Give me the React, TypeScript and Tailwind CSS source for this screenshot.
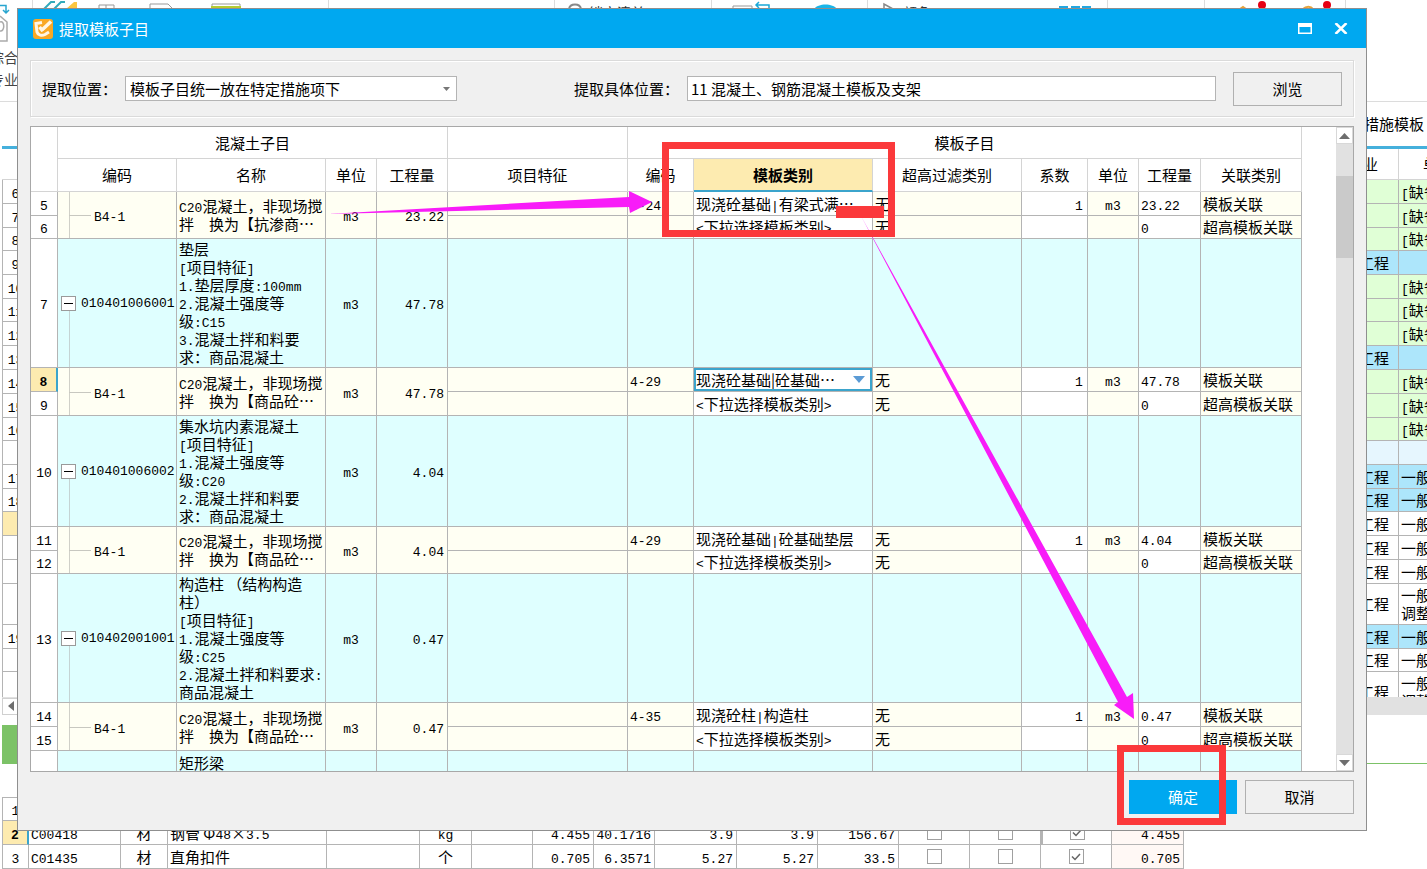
import { type ReactNode } from "react";
import clsx from "clsx";

type ChildRow = {
  no: number;
  h: string;
  code?: string;
  category: string;
  active?: boolean;
  factor?: string;
  unit?: string;
  amount: string;
  relation: string;
};

type Group =
  | {
      kind: "item";
      no?: number;
      h: string;
      code?: string;
      name: string;
      amount?: string;
    }
  | { kind: "quota"; name: string; amount: string; rows: ChildRow[] };

const quotaRows = (
  no: number,
  code: string,
  category: string,
  amount: string,
  shortRow = false,
  active = false
): ChildRow[] => [
  {
    no,
    h: "h-6",
    code,
    category,
    active,
    factor: "1",
    unit: "m3",
    amount,
    relation: "模板关联",
  },
  {
    no: no + 1,
    h: shortRow ? "h-[23px]" : "h-6",
    category: "<下拉选择模板类别>",
    amount: "0",
    relation: "超高模板关联",
  },
];

const groups: Group[] = [
  {
    kind: "quota",
    name: "C20混凝土，非现场搅\n拌　换为【抗渗商…",
    amount: "23.22",
    rows: quotaRows(5, "4-24", "现浇砼基础|有梁式满…", "23.22", true),
  },
  {
    kind: "item",
    no: 7,
    h: "h-[129px]",
    code: "010401006001",
    name: "垫层\n[项目特征]\n1.垫层厚度:100mm\n2.混凝土强度等\n级:C15\n3.混凝土拌和料要\n求：商品混凝土",
    amount: "47.78",
  },
  {
    kind: "quota",
    name: "C20混凝土，非现场搅\n拌　换为【商品砼…",
    amount: "47.78",
    rows: quotaRows(8, "4-29", "现浇砼基础|砼基础…", "47.78", false, true),
  },
  {
    kind: "item",
    no: 10,
    h: "h-[111px]",
    code: "010401006002",
    name: "集水坑内素混凝土\n[项目特征]\n1.混凝土强度等\n级:C20\n2.混凝土拌和料要\n求：商品混凝土",
    amount: "4.04",
  },
  {
    kind: "quota",
    name: "C20混凝土，非现场搅\n拌　换为【商品砼…",
    amount: "4.04",
    rows: quotaRows(11, "4-29", "现浇砼基础|砼基础垫层", "4.04", true),
  },
  {
    kind: "item",
    no: 13,
    h: "h-[129px]",
    code: "010402001001",
    name: "构造柱 （结构构造\n柱）\n[项目特征]\n1.混凝土强度等\n级:C25\n2.混凝土拌和料要求:\n商品混凝土",
    amount: "0.47",
  },
  {
    kind: "quota",
    name: "C20混凝土，非现场搅\n拌　换为【商品砼…",
    amount: "0.47",
    rows: quotaRows(14, "4-35", "现浇砼柱|构造柱", "0.47"),
  },
  { kind: "item", h: "h-[129px]", name: "矩形梁" },
];

// Half-width runs are set in a smaller monospace so they take half a Han character
const Mixed = ({ text }: { text: string }) => (
  <>
    {text.split(/([\x21-\x7e]+)/).map((run, i) =>
      i % 2 ? (
        <span
          key={i}
          className="font-['Liberation_Mono',monospace] text-[13px] leading-none"
        >
          {run}
        </span>
      ) : (
        run
      )
    )}
  </>
);

const Cell = ({
  children,
  className,
  rowSpan,
}: {
  children?: ReactNode;
  className?: string;
  rowSpan?: number;
}) => (
  <td
    rowSpan={rowSpan}
    className={clsx(
      "overflow-hidden border-r border-b border-[#b4b4b4] p-0 whitespace-pre",
      className
    )}
  >
    {children}
  </td>
);

const HeadCell = ({
  children,
  className,
  colSpan,
  rowSpan,
}: {
  children?: ReactNode;
  className?: string;
  colSpan?: number;
  rowSpan?: number;
}) => (
  <th
    colSpan={colSpan}
    rowSpan={rowSpan}
    className={clsx(
      "border-r border-b border-[#d4d4d4] p-0 whitespace-nowrap",
      className || "font-normal"
    )}
  >
    {children}
  </th>
);

const ItemRow = ({ row }: { row: Extract<Group, { kind: "item" }> }) => (
  <tr className={clsx(row.h, "bg-[#dfffff]")}>
    <Cell className="bg-white text-center">
      <Mixed text={row.no ? String(row.no) : ""} />
    </Cell>
    <Cell className="relative pl-[3px]">
      {row.code && (
        <>
          <div className="flex items-center gap-[5px]">
            <button
              aria-label="折叠"
              className="flex size-[15px] shrink-0 items-center justify-center border border-[#9a9a9a] bg-white"
            >
              <span className="h-px w-[9px] bg-black" />
            </button>
            <Mixed text={row.code} />
          </div>
          <span className="absolute top-[calc(50%+8px)] bottom-0 left-[11px] w-px bg-[#c4d4d4]" />
        </>
      )}
    </Cell>
    <Cell className={clsx("pl-[2px]", !row.code && "pt-[3px] align-top")}>
      <Mixed text={row.name} />
    </Cell>
    <Cell className="text-center">
      <Mixed text={row.code ? "m3" : ""} />
    </Cell>
    <Cell className="pr-[3px] text-right">
      <Mixed text={row.amount ?? ""} />
    </Cell>
    <Cell />
    <Cell />
    <Cell />
    <Cell />
    <Cell />
    <Cell />
    <Cell />
    <Cell />
  </tr>
);

const QuotaRows = ({ group }: { group: Extract<Group, { kind: "quota" }> }) => (
  <>
    {group.rows.map((row, i) => (
      <tr key={row.no} className={clsx(row.h, "bg-[#fffff3]")}>
        <Cell
          className={clsx(
            "text-center",
            row.active
              ? "border-r-2 border-r-[#3ba4cc] bg-[#fdebb0] font-bold"
              : "bg-white"
          )}
        >
          <Mixed text={String(row.no)} />
        </Cell>
        {i === 0 && (
          <>
            <Cell rowSpan={2} className="relative pl-9">
              <span className="absolute inset-y-0 left-[11px] w-px bg-[#d0d0c8]" />
              <span className="absolute top-1/2 left-[11px] h-px w-[22px] bg-[#c8c8c0]" />
              <Mixed text="B4-1" />
            </Cell>
            <Cell rowSpan={2} className="pl-[2px]">
              <Mixed text={group.name} />
            </Cell>
            <Cell rowSpan={2} className="text-center">
              <Mixed text="m3" />
            </Cell>
            <Cell rowSpan={2} className="pr-[3px] text-right">
              <Mixed text={group.amount} />
            </Cell>
          </>
        )}
        <Cell />
        <Cell className="pl-[2px]">
          <Mixed text={row.code ?? ""} />
        </Cell>
        {row.active ? (
          <Cell className="relative bg-white">
            <select
              aria-label="模板类别"
              className="block h-[23px] w-full appearance-none border-2 border-[#3ba4cc] bg-white leading-[18px]"
            >
              <option>{row.category}</option>
            </select>
            <svg
              className="pointer-events-none absolute top-2 right-[7px]"
              width="12"
              height="7"
              viewBox="0 0 12 7"
            >
              <path d="M0 0h12L6 7z" fill="#5b9bd5" />
            </svg>
          </Cell>
        ) : (
          <Cell className="bg-white pl-[2px]">
            <Mixed text={row.category} />
          </Cell>
        )}
        <Cell className="pl-[2px]">无</Cell>
        <Cell className="bg-white pr-1 text-right">
          <Mixed text={row.factor ?? ""} />
        </Cell>
        <Cell className="text-center">
          <Mixed text={row.unit ?? ""} />
        </Cell>
        <Cell className="bg-white pl-[2px]">
          <Mixed text={row.amount} />
        </Cell>
        <Cell className="pl-[2px]">{row.relation}</Cell>
      </tr>
    ))}
  </>
);

const QuotaTable = () => (
  <table className="w-full table-fixed border-separate border-spacing-0">
    <colgroup>
      <col className="w-[27px]" />
      <col className="w-[119px]" />
      <col className="w-[149px]" />
      <col className="w-[51px]" />
      <col className="w-[71px]" />
      <col />
      <col className="w-[66px]" />
      <col className="w-[179px]" />
      <col className="w-[149px]" />
      <col className="w-[66px]" />
      <col className="w-[51px]" />
      <col className="w-[62px]" />
      <col className="w-[101px]" />
    </colgroup>
    <thead>
      <tr className="h-8">
        <HeadCell rowSpan={2} />
        <HeadCell colSpan={4}>混凝土子目</HeadCell>
        <HeadCell />
        <HeadCell colSpan={7}>模板子目</HeadCell>
      </tr>
      <tr className="h-[33px]">
        <HeadCell>编码</HeadCell>
        <HeadCell>名称</HeadCell>
        <HeadCell>单位</HeadCell>
        <HeadCell>工程量</HeadCell>
        <HeadCell>项目特征</HeadCell>
        <HeadCell>编码</HeadCell>
        <HeadCell className="border-b-2 border-b-[#3ba4cc] bg-[#fdebb0] font-bold">
          模板类别
        </HeadCell>
        <HeadCell>超高过滤类别</HeadCell>
        <HeadCell>系数</HeadCell>
        <HeadCell>单位</HeadCell>
        <HeadCell>工程量</HeadCell>
        <HeadCell>关联类别</HeadCell>
      </tr>
    </thead>
    <tbody>
      {groups.map((group, i) =>
        group.kind === "item" ? (
          <ItemRow key={i} row={group} />
        ) : (
          <QuotaRows key={i} group={group} />
        )
      )}
    </tbody>
  </table>
);

const ScrollArrow = ({ down = false }: { down?: boolean }) => (
  <button
    aria-label={down ? "向下滚动" : "向上滚动"}
    className="flex h-[17px] w-full items-center justify-center border border-[#d8d8d8] bg-white"
  >
    <svg width="11" height="6" viewBox="0 0 11 6">
      <path d={down ? "M0 0h11L5.500 6z" : "M0 6h11L5.500 0z"} fill="#6e6e6e" />
    </svg>
  </button>
);

const Dialog = () => (
  <section
    role="dialog"
    aria-label="提取模板子目"
    className="absolute top-2 right-[60px] bottom-[38px] left-[17px] flex flex-col border border-[#8f8f8f] bg-[#f0f0f0]"
  >
    <header className="flex h-[39px] shrink-0 items-center bg-[#00a8f0] pr-[18px] pl-[15px] text-white">
      <svg width="20" height="20" viewBox="0 0 20 20" fill="none">
        <rect width="20" height="20" rx="3" fill="#f9a825" />
        <path
          d="M9 3.500L3 4.500l1 8.500c1 3.500 5 4 8 2.500l4-2.500"
          stroke="#fff6e6"
          strokeWidth="3"
        />
        <path d="M6.500 8l2.500 3L18 2.500" stroke="#fff6e6" strokeWidth="3.500" />
        <path d="M8 14l4.500-2.500" stroke="#f9a825" />
      </svg>
      <h1 className="ml-[6px] flex-1">提取模板子目</h1>
      <button aria-label="最大化">
        <svg width="14" height="11" viewBox="0 0 14 11">
          <path d="M0 0h14v11H0zM1.500 4v5.500h11V4z" fill="#fff" fillRule="evenodd" />
        </svg>
      </button>
      <button aria-label="关闭" className="ml-[22px]">
        <svg width="14" height="11" viewBox="0 0 14 11">
          <path d="M1.500 0l11 11M12.500 0l-11 11" stroke="#fff" strokeWidth="2.500" />
        </svg>
      </button>
    </header>

    <div className="flex min-h-0 flex-1 flex-col px-3 pt-3 pb-4">
      {/* Position filters */}
      <div className="flex h-[57px] shrink-0 items-center border border-[#dadada] px-[11px] shadow-[inset_1px_1px_#fff,1px_1px_#fff]">
        <label htmlFor="position" className="w-[83px] shrink-0">
          提取位置：
        </label>
        <div className="relative w-[332px] shrink-0">
          <select
            id="position"
            className="block h-[25px] w-full appearance-none border border-[#b4b4b4] bg-white pl-1"
          >
            <option>模板子目统一放在特定措施项下</option>
          </select>
          <svg
            className="pointer-events-none absolute top-[11px] right-[7px]"
            width="7"
            height="4"
            viewBox="0 0 7 4"
          >
            <path d="M0 0h7L3.500 4z" fill="#777" />
          </svg>
        </div>
        <label htmlFor="target" className="ml-[117px] w-[113px] shrink-0">
          提取具体位置：
        </label>
        <input
          id="target"
          className="h-[25px] min-w-0 flex-1 border border-[#b4b4b4] bg-white px-[3px]"
          defaultValue="11 混凝土、钢筋混凝土模板及支架"
        />
        <button className="ml-[17px] h-[34px] w-[109px] shrink-0 border border-[#b0b0b0]">
          浏览
        </button>
      </div>

      {/* Quota grid */}
      <div className="mt-[9px] flex min-h-0 flex-1 border border-[#a8a8a8] bg-white">
        <div className="min-w-0 flex-1 overflow-hidden pr-[34px]">
          <QuotaTable />
        </div>
        <div className="flex w-[17px] flex-col bg-[#e1e1e1]">
          <ScrollArrow />
          <div className="mt-8 h-[82px] bg-[#cacaca]" />
          <div className="flex-1" />
          <ScrollArrow down />
        </div>
      </div>

      <footer className="mt-2 flex justify-end gap-2">
        <button className="h-[34px] w-[108px] bg-[#00a8f0] text-white">确定</button>
        <button className="h-[34px] w-[109px] border border-[#b0b0b0]">取消</button>
      </footer>
    </div>
  </section>
);

const sheetRows = [
  { no: "6", h: "h-6", tone: "green" },
  { no: "7", h: "h-6", tone: "green" },
  { no: "8", h: "h-[23px]", tone: "green" },
  { no: "9", h: "h-6", tone: "blue" },
  { no: "10", h: "h-6", tone: "green" },
  { no: "11", h: "h-[23px]", tone: "green" },
  { no: "12", h: "h-6", tone: "green" },
  { no: "13", h: "h-6", tone: "blue" },
  { no: "14", h: "h-6", tone: "green" },
  { no: "15", h: "h-6", tone: "green" },
  { no: "16", h: "h-[23px]", tone: "green" },
  { no: "", h: "h-6", tone: "pale" },
  { no: "17", h: "h-6", tone: "blue", note: "一般" },
  { no: "18", h: "h-[23px]", tone: "blue", note: "一般" },
  { no: "", h: "h-6", tone: "white", note: "一般", current: true },
  { no: "", h: "h-6", tone: "white", note: "一般" },
  { no: "", h: "h-6", tone: "white", note: "一般" },
  { no: "", h: "h-[41px]", tone: "white", note: "一般\n调整" },
  { no: "19", h: "h-6", tone: "blue", note: "一般" },
  { no: "", h: "h-[23px]", tone: "white", note: "一般" },
  { no: "", h: "h-[41px]", tone: "white", note: "一般\n调整" },
];

const tones: Record<string, string> = {
  green: "bg-[#e0ffd6]",
  blue: "bg-[#ade6fb]",
  pale: "bg-[#e6f6fe]",
  white: "bg-white",
};

const materialRows = [
  { no: "1" },
  {
    no: "2",
    current: true,
    cells: ["C00418", "材", "钢管 Φ48×3.5", "", "kg", "", "4.455", "40.1716", "3.9", "3.9", "156.67"],
    total: "4.455",
  },
  {
    no: "3",
    cells: ["C01435", "材", "直角扣件", "", "个", "", "0.705", "6.3571", "5.27", "5.27", "33.5"],
    total: "0.705",
  },
];

const Check = ({ label, checked = false }: { label: string; checked?: boolean }) => (
  <span className="grid place-items-center">
    <input
      type="checkbox"
      aria-label={label}
      defaultChecked={checked}
      className="col-start-1 row-start-1 size-[15px] appearance-none border border-[#a0a0a0] bg-white"
    />
    {checked && (
      <svg
        className="pointer-events-none col-start-1 row-start-1"
        width="10"
        height="8"
        viewBox="0 0 10 8"
      >
        <path d="M1 3.500L4 6.500 9 1" fill="none" stroke="#666" strokeWidth="1.500" />
      </svg>
    )}
  </span>
);

const MaterialTable = () => (
  <table className="ml-[2px] w-[1182px] table-fixed border-separate border-spacing-0 border-t border-[#b4b4b4]">
    <colgroup>
      <col className="w-[27px]" />
      <col className="w-[92px]" />
      <col className="w-[47px]" />
      <col className="w-[159px]" />
      <col className="w-[93px]" />
      <col className="w-[52px]" />
      <col className="w-[61px]" />
      <col className="w-[61px]" />
      <col className="w-[61px]" />
      <col className="w-[82px]" />
      <col className="w-[81px]" />
      <col className="w-[81px]" />
      <col className="w-[71px]" />
      <col className="w-[71px]" />
      <col className="w-[71px]" />
      <col />
    </colgroup>
    <tbody>
      {materialRows.map((row) => (
        <tr key={row.no} className={row.no === "1" ? "h-[23px]" : "h-6"}>
          <Cell
            className={clsx(
              "border-l text-center",
              row.current && "border-r-2 border-r-[#3ba4cc] bg-[#fdebb0] font-bold"
            )}
          >
            <Mixed text={row.no} />
          </Cell>
          {row.cells?.map((text, i) => (
            <Cell
              key={i}
              className={clsx(
                i === 1 || i === 4 ? "text-center" : i > 4 ? "pr-[3px] text-right" : "pl-[2px]"
              )}
            >
              <Mixed text={text} />
            </Cell>
          ))}
          {row.cells && (
            <>
              <Cell>
                <Check label="暂估" />
              </Cell>
              <Cell>
                <Check label="锁定" />
              </Cell>
              <Cell className={clsx(row.current && "border-2 border-t-0 border-[#777]")}>
                <Check label="输出" checked />
              </Cell>
              <Cell className="bg-[#fff8f5] pr-[3px] text-right">
                <Mixed text={row.total ?? ""} />
              </Cell>
            </>
          )}
        </tr>
      ))}
    </tbody>
  </table>
);

// Only the top edge of the ribbon shows above the dialog
const Ribbon = () => (
  <div className="relative h-[102px] shrink-0 overflow-hidden border-b border-[#dcdcdc]">
    <svg className="absolute inset-0" width="1360" height="46" viewBox="0 0 1360 46" fill="none">
      <path
        d="M32.500 0v20M328.500 0v20M554.500 0v20M711.500 0v20M867.500 0v20M1107.500 0v20M1204.500 0v20M1345.500 0v20"
        stroke="#dcdcdc"
      />
      <path d="M0 5.500h6v7M3 10l3 3 3-3" stroke="#27a5cf" strokeWidth="1.500" />
      <path d="M0 16l7 6v19H0M0 22c5-2 5 10 0 9" stroke="#aaa" strokeWidth="1.500" />
      <path d="M44 9l7-7h4M54 9l7-7h4" stroke="#33aabb" strokeWidth="2" />
      <path d="M66 9l8-7h3v7z" fill="#fbc540" />
      <path d="M99 9V5h15v4M106 5v4M150 9V4h18l5 5M212 9V4h28v5" stroke="#999" />
      <path d="M211 7.500h30" stroke="#b7cc32" strokeWidth="3" />
      <path d="M569 9c1-6 11-6 12 0" stroke="#888" strokeWidth="2" />
      <path d="M733 9V6h19v3" stroke="#999" />
      <path d="M769 9V5h-13M759 2l-3 3 3 3" stroke="#19a8d8" strokeWidth="1.500" />
      <path d="M814 9c4-6 19-6 23 0z" fill="#19b5e8" />
      <path d="M884 9V4l9 5" stroke="#888" strokeWidth="1.500" />
      <path d="M1059 7.500h9M1071 7.500h9M1082 7.500h9" stroke="#23a7e0" strokeWidth="3" />
      <path d="M1240 9l3-2 3 2M1303 9c3-3 8-3 10 0" stroke="#e8a33a" strokeWidth="2" />
      <circle cx="1262" cy="5" r="4" fill="#e60012" />
      <circle cx="1327" cy="5" r="4" fill="#e60012" />
    </svg>
    <div className="flex pl-[589px] text-[14px] leading-6 text-[#333]">
      <span className="w-[314px]">锁定清单</span>
      <span>颜色</span>
    </div>
    <div className="mt-[22px] flex w-[18px] justify-end text-[14px] leading-[22px] whitespace-nowrap text-[#444]">
      <span>
        综合
        <br />
        专业
      </span>
    </div>
  </div>
);

const Workbook = () => (
  <div className="flex h-full flex-col overflow-hidden">
    <Ribbon />
    <div className="ml-[2px] flex h-[47px] shrink-0 items-center justify-end border-b-3 border-[#45b0dc] pr-[3px]">
      措施模板
    </div>
    <div className="ml-[2px] h-[548px] shrink-0 overflow-hidden">
      <table className="w-[calc(100%+32px)] table-fixed border-separate border-spacing-0">
        <colgroup>
          <col className="w-[27px]" />
          <col />
          <col className="w-[60px]" />
          <col className="w-[60px]" />
        </colgroup>
        <thead>
          <tr className="h-[31px]">
            <HeadCell />
            <HeadCell />
            <HeadCell className="pr-5 text-right font-normal">专业</HeadCell>
            <HeadCell className="pl-6 text-left font-normal">单价</HeadCell>
          </tr>
        </thead>
        <tbody>
          {sheetRows.map((row, i) => (
            <tr key={i} className={clsx(row.h, tones[row.tone])}>
              <Cell
                className={clsx("border-l text-center", row.current ? "bg-[#fdebb0]" : "bg-white")}
              >
                <Mixed text={row.no} />
              </Cell>
              <Cell />
              <Cell className="pr-[9px] text-right">
                {row.note || row.tone === "blue" ? "工程" : ""}
              </Cell>
              <Cell className="pl-[2px]">
                <Mixed text={row.note ?? (row.tone === "green" ? "[缺省]" : "")} />
              </Cell>
            </tr>
          ))}
        </tbody>
      </table>
    </div>
    <div className="ml-[2px] flex h-[18px] shrink-0 items-center bg-[#e1e1e1]">
      <button
        aria-label="向左滚动"
        className="flex size-[17px] items-center justify-center border border-[#d0d0d0] bg-white"
      >
        <svg width="6" height="10" viewBox="0 0 6 10">
          <path d="M6 0v10L0 5z" fill="#6e6e6e" />
        </svg>
      </button>
    </div>
    <div className="mt-[10px] ml-[2px] h-[39px] shrink-0 border-b border-[#7cc267]">
      <div className="h-full w-[120px] bg-[#7cc267]" />
    </div>
    <div className="mt-[33px] shrink-0">
      <MaterialTable />
    </div>
  </div>
);

const Annotations = () => (
  <svg className="pointer-events-none absolute inset-0 size-full">
    <path d="M328 214L629 197V191L652 202L630 213L629 207z" fill="#f81cf8" />
    <path d="M861 216L1127 697L1133 693L1134 719L1114 705L1118 702z" fill="#f81cf8" />
    <g fill="none" stroke="#fb393b" strokeWidth="7">
      <rect x="665.500" y="145.500" width="226" height="88" />
      <rect x="1120.500" y="748.500" width="102" height="73" />
    </g>
    <rect x="836" y="206" width="48" height="12" fill="#fb393b" />
  </svg>
);

const App = () => (
  <main
    lang="zh-CN"
    className="relative h-screen overflow-hidden bg-white font-['Noto_Sans_CJK_SC',sans-serif] text-[15px] leading-[18px] text-black"
  >
    <Workbook />
    <Dialog />
    <Annotations />
  </main>
);

export default App;
